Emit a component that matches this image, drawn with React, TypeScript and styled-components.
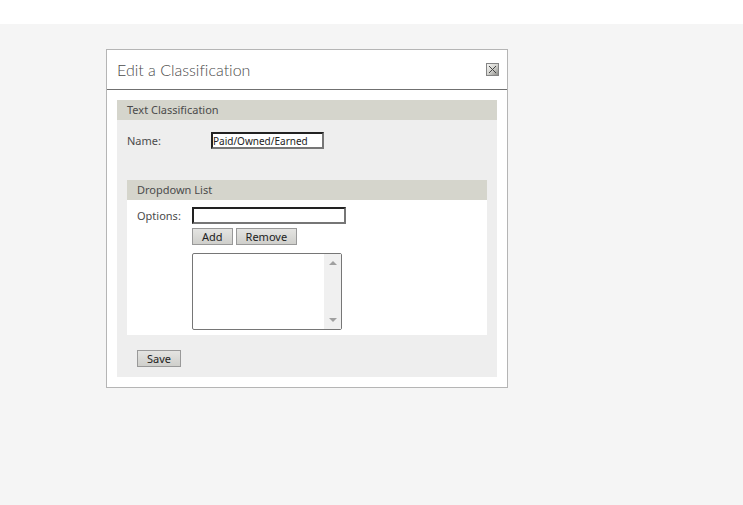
import React from 'react'
import styled, { createGlobalStyle } from 'styled-components'

const GlobalStyle = createGlobalStyle`
	* {
		box-sizing: border-box;
	}
	body {
		margin: 0;
		background: #f5f5f5;
		color: #4b4b4b;
		font-family: 'Noto Sans', sans-serif;
		font-size: 11px;
		line-height: 20px;
	}
	button,
	input,
	select {
		font-family: inherit;
	}
`

const TopBar = styled.header`
	height: 24px;
	background: #fff;
`

const Page = styled.main`
	padding: 25px 24px 24px 106px;
`

const Dialog = styled.section`
	max-width: 402px;
	border: 1px solid #b5b5b5;
	background: #fff;
`

const DialogHeader = styled.div`
	display: flex;
	align-items: center;
	justify-content: space-between;
	height: 40px;
	padding: 0 8px 0 10px;
	border-bottom: 1px solid #707070;
`

const Title = styled.h1`
	margin: 0;
	font-family: Lato, sans-serif;
	font-size: 16px;
	font-weight: 300;
	font-variant-ligatures: none;
`

const CloseButton = styled.button`
	display: flex;
	padding: 0;
	border: 0;
	background: none;
`

const DialogBody = styled.form`
	padding: 10px;
`

const Panel = styled.div`
	background: #eee;
`

const SubPanel = styled.div`
	margin: 0 10px;
	background: #fff;
`

const PanelHeading = styled.h2`
	margin: 0;
	padding: 0 10px;
	background: #d5d5cc;
	font-size: 11px;
	font-weight: 400;
`

const NameRow = styled.div`
	display: flex;
	align-items: flex-start;
	padding: 12px 10px 31px;
`

const OptionsRow = styled.div`
	display: flex;
	align-items: flex-start;
	padding: 7px 10px 5px;
`

const Label = styled.label<{ $width: number }>`
	flex: none;
	width: ${({ $width }) => $width}px;
	line-height: 17px;
`

const TextInput = styled.input<{ $width: number }>`
	display: block;
	width: ${({ $width }) => $width}px;
	height: 17px;
	padding: 0;
	border: 2px solid;
	border-color: #222 #767676 #767676 #222;
	background: #fff;
	color: #222;
	font-size: 10px;
	outline: none;
`

const OptionsColumn = styled.div`
	display: flex;
	flex-direction: column;
	align-items: flex-start;
`

const ButtonGroup = styled.div`
	display: flex;
	gap: 3px;
	margin: 4px 0 8px;
`

const Button = styled.button`
	height: 17px;
	padding: 0 9px;
	border: 1px solid #999;
	background: linear-gradient(#e4e4e2, #cfcfcb);
	color: #222;
	font-size: 11px;
	line-height: 15px;
`

const ListBox = styled.div`
	display: flex;
	width: 150px;
	height: 77px;
	border: 1px solid #767676;
	border-radius: 2px;
	background: #fff;
`

const List = styled.select`
	flex: 1;
	min-width: 0;
	padding: 0;
	border: 0;
	background: none;
	outline: none;
`

const ScrollTrack = styled.div`
	display: flex;
	flex-direction: column;
	justify-content: space-between;
	align-items: center;
	width: 17px;
	padding: 7px 0;
	background: #f0f0f0;
`

const Footer = styled.div`
	display: flex;
	padding: 15px 20px 10px;
`

const CloseIcon = () => (
	<svg width="13" height="13" viewBox="0 0 13 13" shapeRendering="crispEdges">
		<defs>
			<linearGradient id="closeFill" x1="0" y1="0" x2="1" y2="1">
				<stop offset="0" stopColor="#f4f4f2" />
				<stop offset="0.5" stopColor="#d4d4d0" />
				<stop offset="1" stopColor="#8c8c88" />
			</linearGradient>
		</defs>
		<rect width="13" height="13" fill="#858585" />
		<rect x="1" y="1" width="11" height="11" fill="url(#closeFill)" />
		{[3, 4, 5, 6, 7, 8, 9].map(n => (
			<React.Fragment key={n}>
				<rect x={n} y={n} width="1" height="1" fill="#444" />
				<rect x={12 - n} y={n} width="1" height="1" fill="#444" />
			</React.Fragment>
		))}
	</svg>
)

const Arrow = ({ down = false }: { down?: boolean }) => (
	<svg width="8" height="4" viewBox="0 0 8 4">
		<path d={down ? 'M0 0h8L4 4z' : 'M0 4h8L4 0z'} fill="#a0a0a0" />
	</svg>
)

export default function App() {
	const [name, setName] = React.useState('Paid/Owned/Earned')
	const [option, setOption] = React.useState('')
	const [options, setOptions] = React.useState<string[]>([])
	const [selected, setSelected] = React.useState<string[]>([])

	const addOption = () => {
		if (!option || options.includes(option)) return
		setOptions([...options, option])
		setOption('')
	}

	const removeOptions = () => {
		setOptions(options.filter(o => !selected.includes(o)))
		setSelected([])
	}

	return (
		<>
			<GlobalStyle />
			<TopBar />
			<Page>
				<Dialog>
					<DialogHeader>
						<Title>Edit a Classification</Title>
						<CloseButton type="button" aria-label="Close">
							<CloseIcon />
						</CloseButton>
					</DialogHeader>
					<DialogBody onSubmit={e => e.preventDefault()}>
						<Panel>
							<PanelHeading>Text Classification</PanelHeading>
							<NameRow>
								<Label htmlFor="name" $width={84}>
									Name:
								</Label>
								<TextInput id="name" $width={113} value={name} onChange={e => setName(e.target.value)} />
							</NameRow>
							<SubPanel>
								<PanelHeading>Dropdown List</PanelHeading>
								<OptionsRow>
									<Label htmlFor="option" $width={55}>
										Options:
									</Label>
									<OptionsColumn>
										<TextInput id="option" $width={154} value={option} onChange={e => setOption(e.target.value)} />
										<ButtonGroup>
											<Button type="button" onClick={addOption}>
												Add
											</Button>
											<Button type="button" onClick={removeOptions}>
												Remove
											</Button>
										</ButtonGroup>
										<ListBox>
											<List
												multiple
												aria-label="Dropdown list options"
												value={selected}
												onChange={e => setSelected(Array.from(e.target.selectedOptions, o => o.value))}
											>
												{options.map(o => (
													<option key={o}>{o}</option>
												))}
											</List>
											<ScrollTrack>
												<Arrow />
												<Arrow down />
											</ScrollTrack>
										</ListBox>
									</OptionsColumn>
								</OptionsRow>
							</SubPanel>
							<Footer>
								<Button type="submit">Save</Button>
							</Footer>
						</Panel>
					</DialogBody>
				</Dialog>
			</Page>
		</>
	)
}
